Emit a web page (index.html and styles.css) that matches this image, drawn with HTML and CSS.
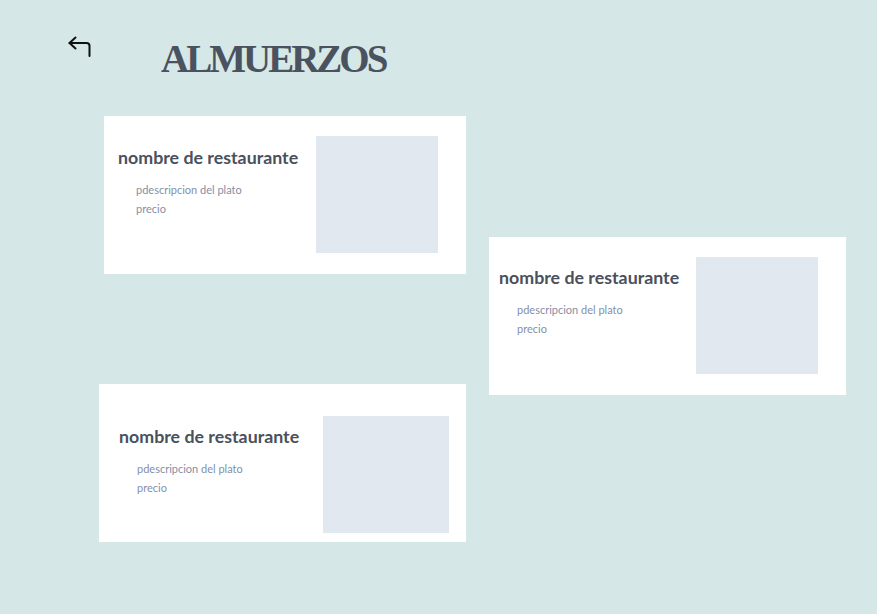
FILE: index.html
```html
<!DOCTYPE html>
<html lang="es">
<head>
<meta charset="utf-8">
<title>Almuerzos</title>
<link rel="stylesheet" href="styles.css">
</head>
<body>
<header class="header">
  <a class="back" href="#" aria-label="Volver">
    <svg width="24" height="24" viewBox="0 0 24 24" fill="none" stroke="#111" stroke-width="2" stroke-linecap="round" stroke-linejoin="round">
      <polyline points="7.5 3.5 1.5 9 7.5 14.5"></polyline>
      <path d="M1.5 9H18.5a3 3 0 0 1 3 3V22"></path>
    </svg>
  </a>
  <h1 class="title">ALMUERZOS</h1>
</header>
<main class="list">
  <article class="card card-1">
    <div class="info">
      <h2 class="name">nombre de restaurante</h2>
      <ul class="details">
        <li>pdescripcion del plato</li>
        <li>precio</li>
      </ul>
    </div>
    <div class="photo"></div>
  </article>
  <article class="card card-2">
    <div class="info">
      <h2 class="name">nombre de restaurante</h2>
      <ul class="details">
        <li>pdescripcion del plato</li>
        <li>precio</li>
      </ul>
    </div>
    <div class="photo"></div>
  </article>
  <article class="card card-3">
    <div class="info">
      <h2 class="name">nombre de restaurante</h2>
      <ul class="details">
        <li>pdescripcion del plato</li>
        <li>precio</li>
      </ul>
    </div>
    <div class="photo"></div>
  </article>
</main>
</body>
</html>
```

FILE: styles.css
```css
html, body {
  margin: 0;
  padding: 0;
}
body {
  background: #d5e7e6;
  font-family: Lato, "Noto Sans", sans-serif;
  min-height: 614px;
}
.header {
  display: flex;
  align-items: flex-start;
  padding: 34px 0 0 68px;
  height: 44px;
}
.back {
  display: block;
  width: 24px;
  height: 24px;
}
.back svg {
  display: block;
}
.title {
  margin: 4px 0 0 69px;
  font-family: "Liberation Serif", "Times New Roman", serif;
  font-weight: 700;
  font-size: 39px;
  line-height: 41px;
  color: #4a5260;
  letter-spacing: -3px;
}
.list {
  display: flex;
  flex-direction: column;
  align-items: flex-start;
  padding-top: 38px;
}
.card {
  display: flex;
  justify-content: space-between;
  align-items: flex-start;
  background: #ffffff;
  height: 158px;
  box-sizing: border-box;
}
.card-1 {
  margin-left: 104px;
  width: 362px;
  padding: 20px 28px 0 14px;
}
.card-2 {
  margin-left: 489px;
  margin-top: -37px;
  width: 357px;
  padding: 20px 28px 0 10px;
}
.card-3 {
  margin-left: 99px;
  margin-top: -11px;
  width: 367px;
  padding: 32px 17px 0 20px;
}
.info {
  padding-top: 11px;
}
.card-2 .info {
  padding-top: 10px;
}
.card-3 .info {
  padding-top: 10px;
}
.name {
  margin: 0;
  font-size: 17.8px;
  line-height: 21.6px;
  font-weight: 700;
  color: #4a505c;
}
.details {
  list-style: none;
  margin: 11px 0 0 0;
  padding: 0 0 0 18px;
  font-size: 11px;
  line-height: 19px;
  color: #8390a6;
}
.photo {
  width: 122px;
  height: 117px;
  background: #e2e8f0;
  flex: none;
}
.card-3 .photo {
  width: 126px;
}
```
